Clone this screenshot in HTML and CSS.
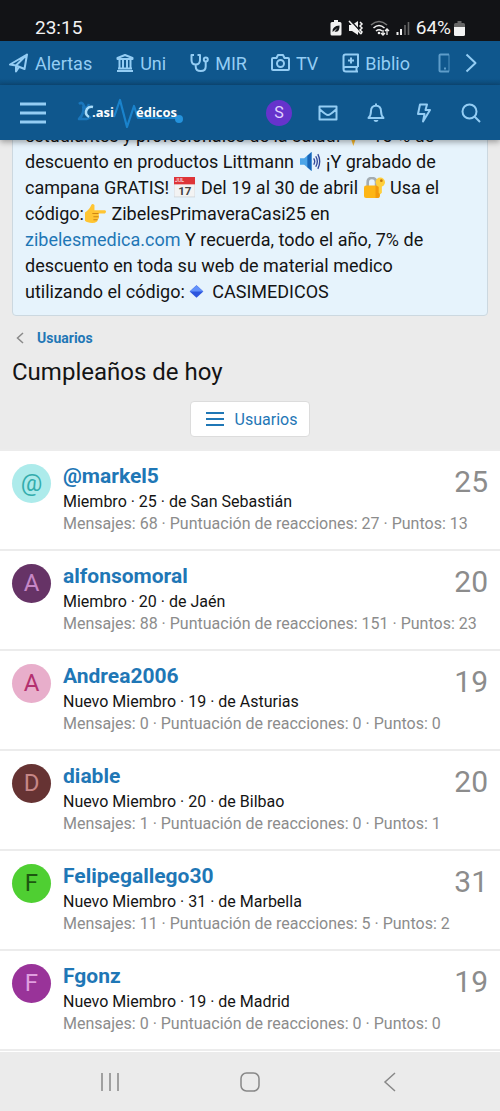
FILE: index.html
```
<!DOCTYPE html>
<html lang="es">
<head>
<meta charset="utf-8">
<meta name="viewport" content="width=device-width, initial-scale=1">
<title>Cumpleaños de hoy</title>
<link rel="stylesheet" href="styles.css">
</head>
<body>
<div class="status">
  <span>23:15</span>
  <div class="status-icons">
    <svg width="12" height="16" viewBox="0 0 12 16"><path fill="#f2f2f2" d="M4 0h4v2h2q1.500 0 1.500 1.500v10.500q0 1.500-1.500 1.500H2Q.5 15.500.5 14V3.500Q.5 2 2 2h2z"/><path d="M2.500 12q-.5-6 7-6.500.5 7-5 6.200l3-3.700" fill="#15171a"/></svg>
    <svg width="16" height="16" viewBox="0 0 16 16"><path fill="#f2f2f2" d="M1 5h3l6-4v14l-6-4H1z"/><path d="M2 0l12 13" stroke="#15171a" stroke-width="1.500"/><path d="M1 1l12 13M12 2l2 2-2 2 2 2-2 2 2 2-1 2" stroke="#f2f2f2" stroke-width="1.500" fill="none"/></svg>
    <svg width="20" height="16" viewBox="0 0 20 16" fill="none" stroke-width="1.600"><path d="M1 5Q9-2 17 5" stroke="#777"/><path d="M3.500 8Q9 3 14.500 8M6 11q3-2.500 6 0" stroke="#f2f2f2"/><circle cx="9" cy="13" r="1.300" fill="#f2f2f2"/><path d="M13 10v5m-2-2 2 2 2-2M17 15V9m-2 2 2-2 2 2" stroke="#f2f2f2" stroke-width="1.300"/></svg>
    <svg width="14" height="16" viewBox="0 0 14 16"><path d="M1.500 12v3M5 9v6" stroke="#f2f2f2" stroke-width="2"/><path d="M9 5v10M12.500 2v13" stroke="#666" stroke-width="1.600"/></svg>
    <span class="status-pct">64%</span>
    <svg width="11" height="15" viewBox="0 0 11 15"><path fill="#666" d="M3.500 0h4v2h2q1.500 0 1.500 1.500V7H0V3.500Q0 2 1.500 2h2z"/><path fill="#f2f2f2" d="M0 6h11v7.500q0 1.500-1.500 1.500h-8Q0 15 0 13.500z"/></svg>
  </div>
</div>
<nav class="tabs">
  <a href="#"><svg width="20" height="20" viewBox="0 0 20 20"><path d="M1 11.500 18 1.500 15.500 16 7 12.500zM7 12.500 18 1.500M7 12.500v6l3-4.500"/></svg>Alertas</a>
  <a href="#"><svg width="18" height="20" viewBox="0 0 18 20"><path d="M1.500 6V5L9 2l7.500 3v1zM3.500 7v8M7 7v8M11 7v8M14.500 7v8M2 15.500h14M1 18h16"/></svg>Uni</a>
  <a href="#"><svg width="19" height="20" viewBox="0 0 19 20"><path d="M4 2H1.500v5q0 4.500 4.200 4.500T10 7V2H7.500M5.700 11.500v2q0 4.500 5 4.500t5-4.500V8.500"/><circle cx="15.800" cy="6.500" r="2"/></svg>MIR</a>
  <a href="#"><svg width="19" height="20" viewBox="0 0 19 20"><path d="M1 6q0-1 1-1h3.500l1.500-3h5l1.500 3H17q1 0 1 1v10q0 1-1 1H2q-1 0-1-1z"/><circle cx="9.500" cy="10.500" r="3.500"/></svg>TV</a>
  <a href="#"><svg width="17" height="20" viewBox="0 0 17 20"><path d="M16 14V1.500H3.500Q1.500 1.500 1.500 3.500v12.500q0 2.500 2.500 2.500h12M16 14H3.500q-2 0-2 2M14.500 14v4.500M9 4.500v6M6 7.500h6"/></svg>Biblio</a>
  <a href="#" class="tab-faded" aria-label="Móvil"><svg width="12" height="20" viewBox="0 0 12 20"><path d="M11 1.500H2.500Q1.500 1.500 1.500 2.500v15q0 1 1 1H11M6 15.500h2"/><path class="faint" d="M11 1.500v17"/></svg></a>
  <button class="tab-next" aria-label="Siguiente"><svg width="12" height="20" viewBox="0 0 12 20"><path d="m1.500 1.500 9 8.500-9 8.500"/></svg></button>
</nav>
<header class="header">
  <button class="icon-btn" aria-label="Menú"><svg width="26" height="24" viewBox="0 0 26 24"><path stroke-width="3" d="M0 3h26M0 12h26M0 21h26"/></svg></button>
  <a class="logo" href="#" aria-label="CasiMédicos">
    <svg width="108" height="34" viewBox="0 0 108 34"><path d="M3 8q3-3 5 2t5-2M7 10q2 7-4 13h8l4-2" fill="none" stroke="#1a77bd" stroke-width="2.500"/><path d="M13 21q-5-3-2-8 2-3 6-2" fill="none" stroke="#a9dcf9" stroke-width="2.500"/><path d="M38 21 44 4l7 27 7-21 4 12h38" fill="none" stroke="#1a83cc" stroke-width="2.200"/><circle class="ball" cx="103" cy="23" r="4"/><text x="16" y="21">.asi</text><text x="60" y="21">édicos</text></svg>
  </a>
  <div class="tools">
    <a class="me" href="#">S</a>
    <a href="#" aria-label="Mensajes"><svg width="20" height="20" viewBox="0 0 20 20"><path d="M1.500 3.500h17v13h-17zM2 6.500q6 5.500 8 5.500t8-5.500"/></svg></a>
    <a href="#" aria-label="Alertas"><svg width="18" height="20" viewBox="0 0 18 20"><path d="M9 .5v2M1.500 15q2.500-2.500 2.500-7 0-5 5-5.500 5 .5 5 5.500 0 4.500 2.500 7z"/><path d="M6.500 17q.5 2 2.500 2t2.500-2z" class="solid"/></svg></a>
    <a href="#" aria-label="Novedades"><svg width="16" height="20" viewBox="0 0 16 20"><path d="M4 1.500h7L9.500 7H14L7 18.500l1.500-7.500H2z"/></svg></a>
    <a href="#" aria-label="Buscar"><svg width="20" height="20" viewBox="0 0 20 20"><circle cx="8.500" cy="8.500" r="7"/><path d="m13.500 13.500 5.500 5.500"/></svg></a>
  </div>
</header>
<main>
  <div class="notice-wrap">
    <p class="notice">estudiantes y profesionales de la salud!
      <svg class="emoji" viewBox="0 0 20 20"><path fill="#f4b62c" d="M7 4l2 6 5 2-5 2-2 6-2-6-5-2 5-2zM15 0l1 4 4 1-4 1-1 5-1-5-3-1 3-1z"/></svg>
      15 % de descuento en productos Littmann
      <svg class="emoji" viewBox="0 0 20 20"><path fill="#4ba4e8" d="M0 7h4l7-6v18l-7-6H0z"/><path fill="#1765b8" d="M7 4.500 11 1v18l-4-3.500z"/><path d="M13 7q2 3 0 6M15 5q3 5 0 10M17 3q3.500 7 0 14" fill="none" stroke="#33489a" stroke-width="1.300"/></svg>
      ¡Y grabado de campana GRATIS!
      <svg class="emoji" viewBox="0 0 20 20"><path fill="#f3f3f3" stroke="#c5cbd0" stroke-width=".6" d="M0 1h20v18H0z"/><path fill="#de3438" d="M0 0h20v7H0z"/><text class="cal-m" x="1" y="5">JUL</text><text class="cal-d" x="4" y="17">17</text></svg>
      Del 19 al 30 de abril
      <svg class="emoji" viewBox="0 0 20 20"><path d="M3.500 10V5q0-4 4-4t4 4v5" fill="none" stroke="#a4acb1" stroke-width="2.500"/><rect y="8" width="15" height="12" rx="2" fill="#fdb515"/><path d="M11 8v12h2q2 0 2-2v-8z" fill="#f29a0c"/><circle cx="15.500" cy="5" r="4.500" fill="#ffcf3c"/><path d="M14 8h3v7l-1.500 1.500L14 15z" fill="#ffcf3c"/><circle cx="16.500" cy="3.500" r="1.300" fill="#c47a10"/></svg>
      Usa el código:<svg class="emoji" viewBox="0 0 20 20"><path fill="#ffc533" d="M0 9q4-2 6-7 1-2 3 0v5h10q2 1 0 3h-7q2 1 1 3 1 1-1 3 0 3-5 3-5 0-7-2z"/><path d="M7 10h6M8 13h5M8 16h4" stroke="#ce8514"/></svg>
      ZibelesPrimaveraCasi25 en <a href="#">zibelesmedica.com</a> Y recuerda, todo el año, 7% de descuento en toda su web de material medico utilizando el código:<svg class="emoji" viewBox="0 0 20 20"><path fill="#2d55dd" d="M10 4l6.500 6-6.500 6-6.500-6z"/><path fill="#6291fa" d="M10 4l6.500 6h-13z"/></svg>
      CASIMEDICOS</p>
  </div>
  <div class="crumb"><svg width="8" height="12" viewBox="0 0 8 12"><path d="M7 1 1.500 6 7 11"/></svg><a href="#">Usuarios</a></div>
  <h1>Cumpleaños de hoy</h1>
  <button class="users-btn"><svg width="18" height="16" viewBox="0 0 18 16"><path d="M0 2h18M0 8h18M0 14h18"/></svg>Usuarios</button>
  <ul class="members">
    <li><span class="avatar a1">@</span><div class="info"><a href="#">@markel5</a><p>Miembro · 25 · de San Sebastián</p><p class="stats">Mensajes: 68 · Puntuación de reacciones: 27 · Puntos: 13</p></div><span class="age">25</span></li>
    <li><span class="avatar a2">A</span><div class="info"><a href="#">alfonsomoral</a><p>Miembro · 20 · de Jaén</p><p class="stats">Mensajes: 88 · Puntuación de reacciones: 151 · Puntos: 23</p></div><span class="age">20</span></li>
    <li><span class="avatar a3">A</span><div class="info"><a href="#">Andrea2006</a><p>Nuevo Miembro · 19 · de Asturias</p><p class="stats">Mensajes: 0 · Puntuación de reacciones: 0 · Puntos: 0</p></div><span class="age">19</span></li>
    <li><span class="avatar a4">D</span><div class="info"><a href="#">diable</a><p>Nuevo Miembro · 20 · de Bilbao</p><p class="stats">Mensajes: 1 · Puntuación de reacciones: 0 · Puntos: 1</p></div><span class="age">20</span></li>
    <li><span class="avatar a5">F</span><div class="info"><a href="#">Felipegallego30</a><p>Nuevo Miembro · 31 · de Marbella</p><p class="stats">Mensajes: 11 · Puntuación de reacciones: 5 · Puntos: 2</p></div><span class="age">31</span></li>
    <li><span class="avatar a6">F</span><div class="info"><a href="#">Fgonz</a><p>Nuevo Miembro · 19 · de Madrid</p><p class="stats">Mensajes: 0 · Puntuación de reacciones: 0 · Puntos: 0</p></div><span class="age">19</span></li>
  </ul>
</main>
<footer class="sysnav">
  <button aria-label="Recientes"><svg width="20" height="20" viewBox="0 0 20 20"><path d="M2 1v18M10 1v18M18 1v18"/></svg></button>
  <button aria-label="Inicio"><svg width="20" height="20" viewBox="0 0 20 20"><rect x="1" y="1" width="18" height="18" rx="5.500"/></svg></button>
  <button aria-label="Atrás"><svg width="20" height="20" viewBox="0 0 20 20"><path d="M15 1 5 10l10 9"/></svg></button>
</footer>
</body>
</html>
```
FILE: styles.css
```
* { box-sizing: border-box; }
body { margin: 0; min-height: 100vh; display: flex; flex-direction: column; background: #ebebeb; color: #141414; font-family: Roboto, "Noto Sans", sans-serif; font-size: 18px; }
a { color: #1f77b6; text-decoration: none; }
button { border: 0; background: none; padding: 0; font: inherit; cursor: pointer; }
p, h1, ul { margin: 0; padding: 0; }
svg { flex: none; }

.status { display: flex; justify-content: space-between; align-items: center; height: 41px; padding: 15px 35px 0 35px; background: #121316; color: #f2f2f2; font-size: 19px; line-height: 24px; }
.status-icons { display: flex; align-items: center; gap: 6px; }
.status-pct { margin-right: -3px; }

.tabs { display: flex; align-items: center; height: 44px; padding: 0 23px 0 9px; background: linear-gradient(#0f578d 85%, #0c4a79); }
.tabs a { display: flex; align-items: center; gap: 6px; margin-right: 24px; color: #94cdf4; }
.tabs svg, .header svg { fill: none; stroke: #94cdf4; stroke-width: 2; stroke-linejoin: round; }
.tabs .tab-faded { margin: 0 0 0 4px; opacity: .6; }
.faint { opacity: .4; }
.tab-next { display: flex; margin-left: auto; }

.header { position: relative; z-index: 1; display: flex; align-items: center; height: 55px; padding: 0 19px 0 20px; background: #0f578d; box-shadow: 0 2px 6px rgba(0, 0, 0, .35); }
.header svg { display: block; }
.header svg .solid { fill: #94cdf4; stroke: none; }
.header svg .ball { fill: #2492dc; stroke: none; }
.logo { margin-left: 30px; }
.logo text { fill: #fff; stroke: none; font: bold 13px "Open Sans", sans-serif; }
.tools { flex: 1; display: flex; align-items: center; justify-content: flex-end; gap: 29px; }
.tools a:nth-child(1) { margin-right: -3px; }
.me { width: 26px; height: 26px; border-radius: 50%; background: #6633cc; color: #e0d1ff; font-size: 16px; line-height: 26px; text-align: center; }
.tools a:nth-child(4) { margin-left: 2px; }

main { flex: 1; background: #ebebeb; }
.notice-wrap { overflow: hidden; padding: 0 12px; }
.notice { margin-top: -18px; padding: 0 12px 10px; border: 1px solid #ccd8e0; border-radius: 4px; background: #e6f3fc; line-height: 26px; }
.emoji { width: 21px; height: 21px; margin: 0 1px; vertical-align: -4px; }
.cal-m { font-size: 5px; fill: #fff; }
.cal-d { font-size: 11px; font-weight: bold; fill: #444; }

.crumb { display: flex; align-items: center; gap: 13px; padding: 12px 16px 0; font-size: 14px; font-weight: 700; line-height: 20px; }
.crumb svg { fill: none; stroke: #8a8a8a; stroke-width: 1.500; }
h1 { padding: 8px 12px 0; font-size: 24px; font-weight: 400; line-height: 32px; }
.users-btn { display: flex; align-items: center; gap: 11px; height: 36px; margin: 13px auto; padding: 0 12px 0 15px; border: 1px solid #dcdcdc; border-radius: 4px; background: #fff; color: #1f77b6; font-size: 16px; }
.users-btn svg { stroke: #1f77b6; stroke-width: 2; }

.members { margin-top: -1px; padding-bottom: 1px; list-style: none; background: #fff; }
.members li { display: flex; align-items: flex-start; gap: 12px; height: 100px; padding: 13px 12px 0; border-top: 2px solid #ececec; }
.members li:last-child { height: 102px; border-bottom: 2px solid #ececec; }
.avatar { width: 39px; height: 39px; flex: none; border-radius: 50%; font-size: 24px; line-height: 39px; text-align: center; }
.a1 { background: #adebeb; color: #33adad; }
.a2 { background: #663366; color: #c687c6; }
.a3 { background: #e8aecb; color: #b4306f; }
.a4 { background: #663333; color: #c68787; }
.a5 { background: #4fcf32; color: #1d5710; }
.a6 { background: #993399; color: #df9fdf; }
.info { flex: 1; min-width: 0; font-size: 16px; line-height: 22px; white-space: nowrap; }
.info a { display: block; margin-bottom: 3px; font-size: 21px; font-weight: 700; line-height: 24px; }
.stats { color: #8c8c8c; }
.age { width: 0; display: flex; justify-content: flex-end; color: #8c8c8c; font-size: 30px; line-height: 36px; }

.sysnav { display: flex; justify-content: space-around; align-items: center; height: 58px; padding: 0 40px; background: #ebebeb; }
.sysnav svg { display: block; fill: none; stroke: #888; stroke-width: 1.500; }
```
